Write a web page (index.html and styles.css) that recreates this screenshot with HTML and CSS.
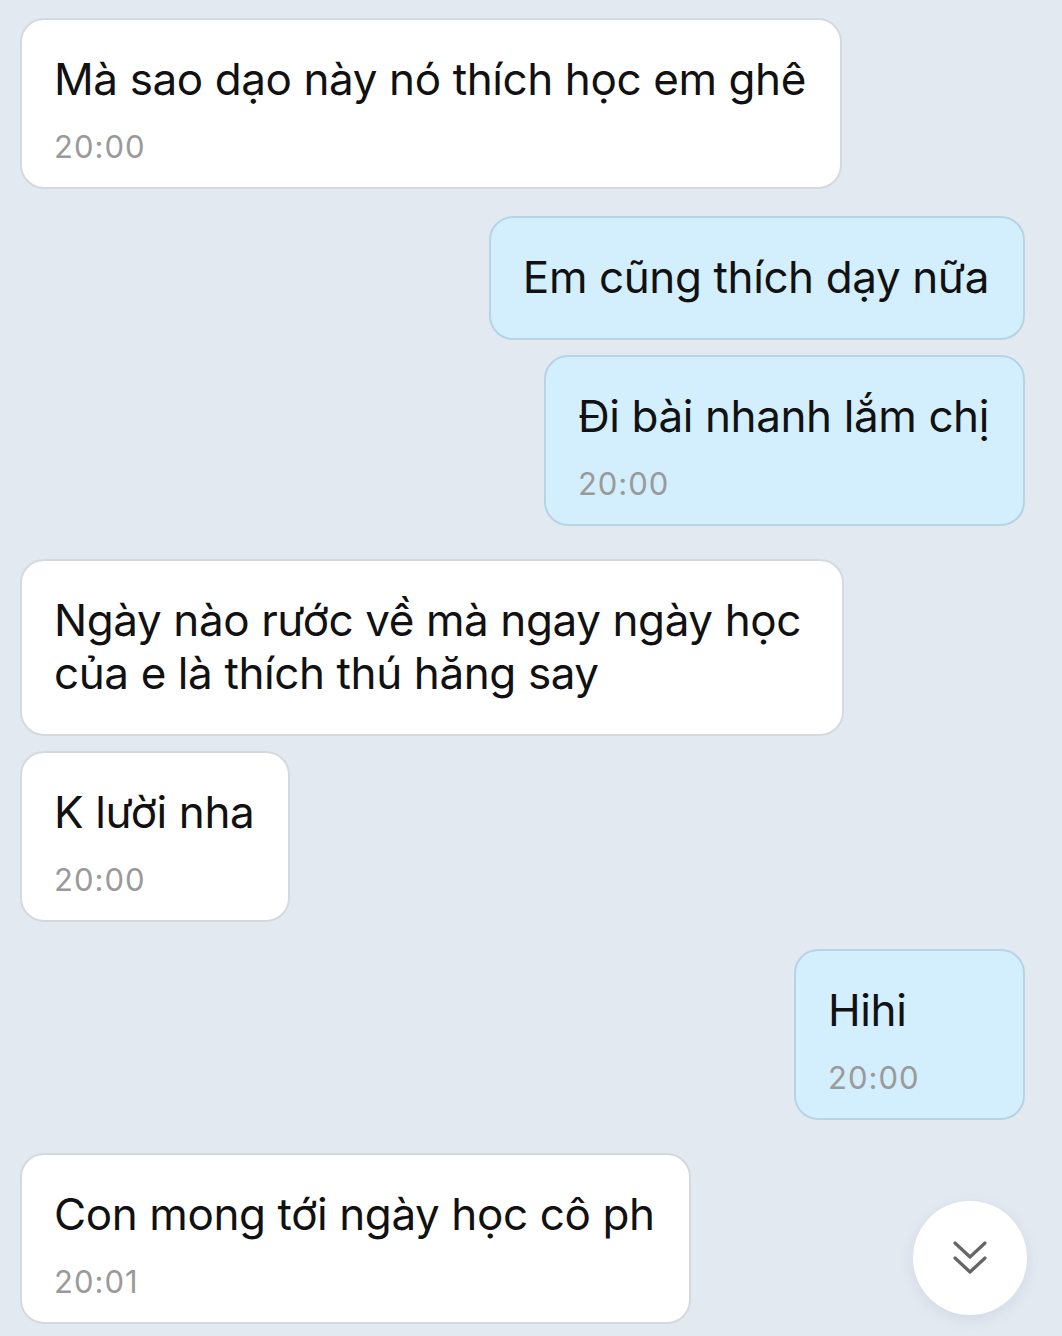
FILE: index.html
```html
<!DOCTYPE html>
<html lang="vi">
<head>
    <meta charset="UTF-8">
    <meta name="viewport" content="width=device-width, initial-scale=1.0">
    <title>Chat</title>
    <link rel="stylesheet" href="styles.css">
</head>
<body>
    <div class="chat">
        <div class="group">
            <div class="bubble in">
                <div class="text">Mà sao dạo này nó thích học em ghê</div>
                <div class="time">20:00</div>
            </div>
        </div>

        <div class="group out">
            <div class="bubble out">
                <div class="text">Em cũng thích dạy nữa</div>
            </div>
            <div class="bubble out">
                <div class="text">Đi bài nhanh lắm chị</div>
                <div class="time">20:00</div>
            </div>
        </div>

        <div class="group far">
            <div class="bubble in">
                <div class="text">Ngày nào rước về mà ngay ngày học của e là thích thú hăng say</div>
            </div>
            <div class="bubble in">
                <div class="text">K lười nha</div>
                <div class="time">20:00</div>
            </div>
        </div>

        <div class="group out">
            <div class="bubble out">
                <div class="text">Hihi</div>
                <div class="time">20:00</div>
            </div>
        </div>

        <div class="group far">
            <div class="bubble in">
                <div class="text">Con mong tới ngày học cô ph</div>
                <div class="time">20:01</div>
            </div>
        </div>
    </div>

    <button class="scroll-down" type="button" aria-label="Scroll to bottom">
        <svg width="34" height="34" viewBox="0 0 34 34" fill="none" stroke="#666" stroke-width="3.2" stroke-linecap="round" stroke-linejoin="round">
            <polyline points="2,2 17,16 32,2"/>
            <polyline points="2,17 17,31 32,17"/>
        </svg>
    </button>
</body>
</html>
```

FILE: styles.css
```css
html, body {
    height: 100%;
    overflow: hidden;
}
body {
    margin: 0;
    background-color: #e3e9f1;
    font-family: Inter, "Noto Sans", sans-serif;
    color: #111;
}
.chat {
    display: flex;
    flex-direction: column;
    gap: 27px;
    padding: 18px 37px 0 20px;
}
.group {
    display: flex;
    flex-direction: column;
    align-items: flex-start;
    gap: 15px;
}
.group.out {
    align-items: flex-end;
}
.group.far {
    margin-top: 6px;
}
.bubble {
    box-sizing: border-box;
    max-width: 824px;
    min-width: 231px;
    padding: 33px 34px 34px 32px;
    border: 2px solid #d5d9df;
    border-radius: 24px;
    background: #fff;
}
.bubble.out {
    background: #d3eefc;
    border-color: #b7d4e5;
}
.text {
    font-size: 44px;
    line-height: 53px;
    letter-spacing: -0.4px;
}
.time {
    font-size: 31px;
    line-height: 37px;
    letter-spacing: 1px;
    color: #9a9a9a;
    margin: 22px 0 -12px;
}
.scroll-down {
    position: fixed;
    right: 35px;
    bottom: 21px;
    width: 114px;
    height: 114px;
    border: none;
    border-radius: 50%;
    background: #fff;
    box-shadow: 0 4px 14px rgba(90, 110, 140, 0.12);
    display: flex;
    align-items: center;
    justify-content: center;
    cursor: pointer;
}
```
